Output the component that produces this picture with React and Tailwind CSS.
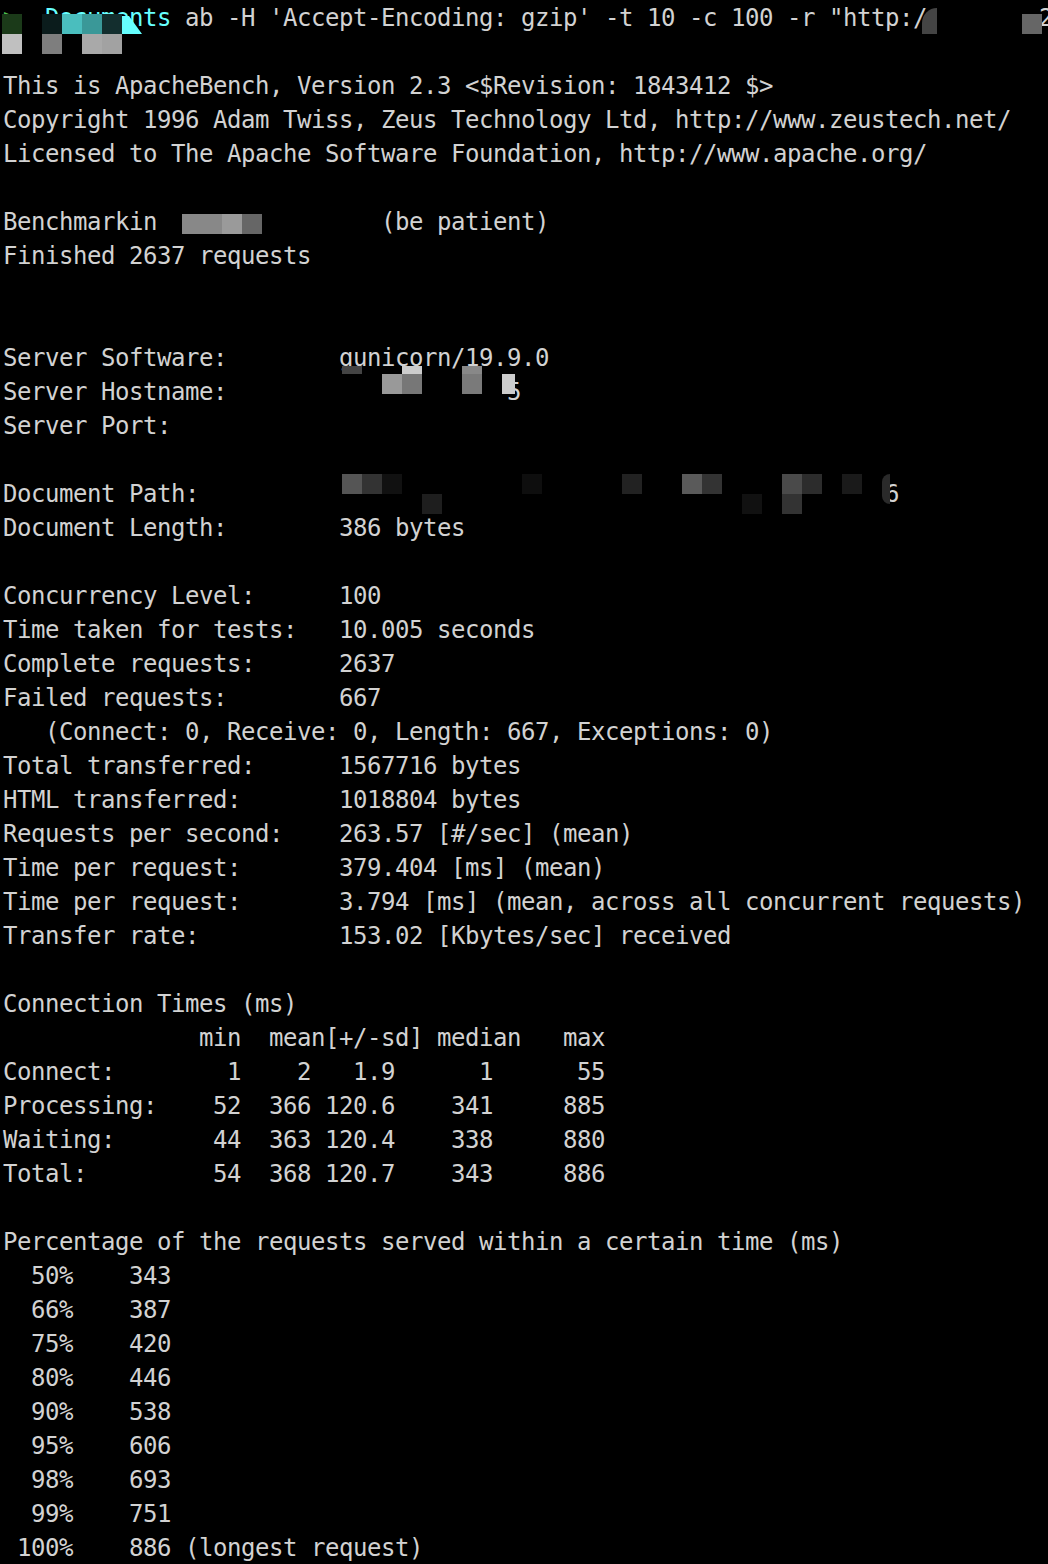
import React from "react";

const pad = (label, value = "") => label.padEnd(24, " ") + value;

const lines = [
  "prompt",
  "",
  "This is ApacheBench, Version 2.3 <$Revision: 1843412 $>",
  "Copyright 1996 Adam Twiss, Zeus Technology Ltd, http://www.zeustech.net/",
  "Licensed to The Apache Software Foundation, http://www.apache.org/",
  "",
  "Benchmarkin".padEnd(27, " ") + "(be patient)",
  "Finished 2637 requests",
  "",
  "",
  pad("Server Software:", "gunicorn/19.9.0"),
  "Server Hostname:".padEnd(36, " ") + "5",
  "Server Port:",
  "",
  "Document Path:".padEnd(63, " ") + "6",
  pad("Document Length:", "386 bytes"),
  "",
  pad("Concurrency Level:", "100"),
  pad("Time taken for tests:", "10.005 seconds"),
  pad("Complete requests:", "2637"),
  pad("Failed requests:", "667"),
  "   (Connect: 0, Receive: 0, Length: 667, Exceptions: 0)",
  pad("Total transferred:", "1567716 bytes"),
  pad("HTML transferred:", "1018804 bytes"),
  pad("Requests per second:", "263.57 [#/sec] (mean)"),
  pad("Time per request:", "379.404 [ms] (mean)"),
  pad("Time per request:", "3.794 [ms] (mean, across all concurrent requests)"),
  pad("Transfer rate:", "153.02 [Kbytes/sec] received"),
  "",
  "Connection Times (ms)",
  "              min  mean[+/-sd] median   max",
  "Connect:        1    2   1.9      1      55",
  "Processing:    52  366 120.6    341     885",
  "Waiting:       44  363 120.4    338     880",
  "Total:         54  368 120.7    343     886",
  "",
  "Percentage of the requests served within a certain time (ms)",
  "  50%    343",
  "  66%    387",
  "  75%    420",
  "  80%    446",
  "  90%    538",
  "  95%    606",
  "  98%    693",
  "  99%    751",
  " 100%    886 (longest request)",
];

// redaction mosaic tiles: x, y, w, h, colour
const tiles = [
  [2, 14, 20, 20, "#1b3a19"],
  [42, 14, 20, 20, "#0b1c1c"],
  [62, 14, 20, 20, "#4abebe"],
  [82, 14, 20, 20, "#3a9898"],
  [102, 14, 20, 20, "#132e2e"],
  [2, 34, 20, 20, "#c0c0c0"],
  [42, 34, 20, 20, "#7e7e7e"],
  [82, 34, 20, 20, "#a9a9a9"],
  [102, 34, 20, 20, "#a2a2a2"],
  [1022, 14, 20, 20, "#666666"],
  [182, 214, 40, 20, "#888888"],
  [222, 214, 20, 20, "#9a9a9a"],
  [242, 214, 20, 20, "#666666"],
  [342, 366, 20, 8, "#444444"],
  [382, 374, 20, 20, "#999999"],
  [402, 366, 20, 8, "#cccccc"],
  [402, 374, 20, 20, "#777777"],
  [462, 366, 20, 8, "#888888"],
  [462, 374, 20, 20, "#7a7a7a"],
  [502, 374, 13, 20, "#cccccc"],
  [342, 474, 20, 20, "#555555"],
  [362, 474, 20, 20, "#333333"],
  [382, 474, 20, 20, "#111111"],
  [522, 474, 20, 20, "#0e0e0e"],
  [622, 474, 20, 20, "#222222"],
  [682, 474, 20, 20, "#5a5a5a"],
  [702, 474, 20, 20, "#333333"],
  [782, 474, 20, 20, "#4a4a4a"],
  [802, 474, 20, 20, "#2c2c2c"],
  [842, 474, 20, 20, "#1a1a1a"],
  [422, 494, 20, 20, "#1e1e1e"],
  [742, 494, 20, 20, "#111111"],
  [782, 494, 20, 20, "#333333"],
];

const PromptLine = () => (
  <div className="h-[34px] leading-[34px] whitespace-pre">
    <span className="text-[#4fc24f]">{">  "}</span>
    <span className="text-[#66ffff]">Documents</span>
    <span> ab -H 'Accept-Encoding: gzip' -t 10 -c 100 -r "http:/</span>
    <span>{"        "}2</span>
  </div>
);

export default function App() {
  return (
    <div className="relative w-[1048px] h-[1564px] overflow-hidden bg-black text-[#d2d2d2] font-['DejaVu_Sans_Mono','Liberation_Mono',monospace] text-[24px] tracking-[-0.45px]">
      <div className="flex flex-col pl-[3px] pt-[1px]">
        {lines.map((line, i) =>
          line === "prompt" ? (
            <PromptLine key={i} />
          ) : (
            <div key={i} className="h-[34px] leading-[34px] whitespace-pre">
              {line}
            </div>
          )
        )}
      </div>

      {/* pixelated redactions */}
      {tiles.map(([x, y, w, h, c], i) => (
        <div
          key={`t${i}`}
          className="absolute"
          style={{ left: x, top: y, width: w, height: h, background: c }}
        />
      ))}
      <div className="absolute left-[122px] top-[16px] w-[20px] h-[18px] bg-[#66ffff] [clip-path:polygon(0_0,35%_0,100%_100%,0_100%)]" />
      <div className="absolute left-[922px] top-[8px] w-[15px] h-[26px] bg-[#444444] rounded-tl-full" />
      <div className="absolute left-[882px] top-[474px] w-[8px] h-[30px] bg-[#2a2a2a] rounded-l-full" />
    </div>
  );
}
